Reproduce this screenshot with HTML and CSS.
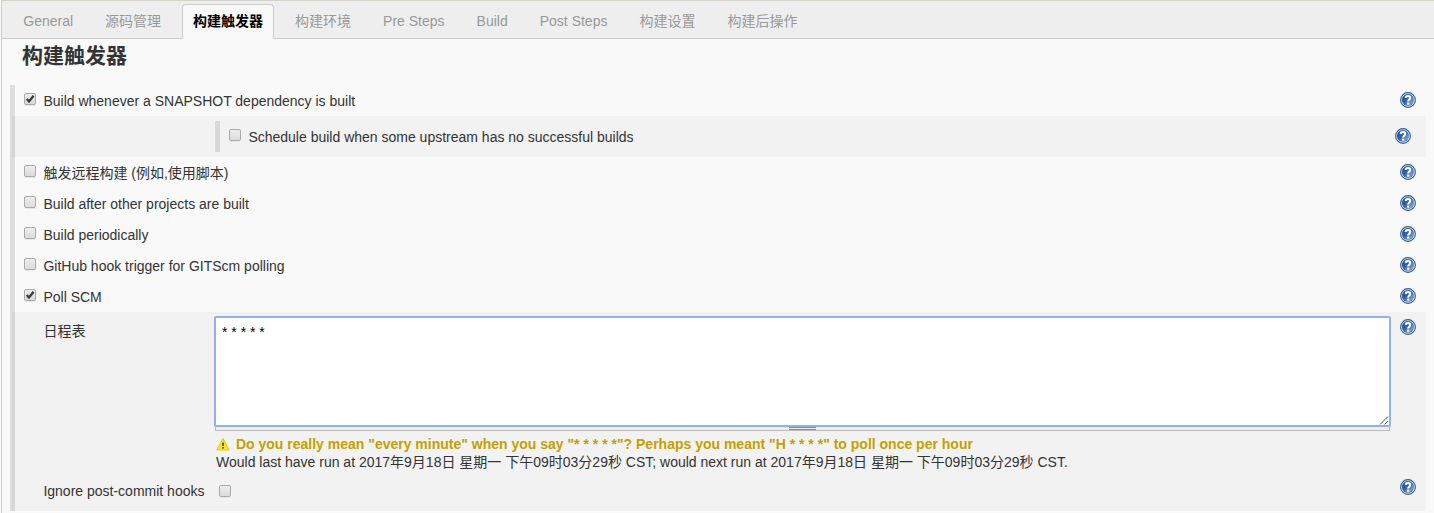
FILE: index.html
```html
<!DOCTYPE html>
<html lang="zh-CN">
<head>
<meta charset="utf-8">
<title>构建触发器</title>
<link rel="stylesheet" href="styles.css">
</head>
<body>
<svg class="defs" width="0" height="0" aria-hidden="true">
  <defs>
    <linearGradient id="blue" x1="0" y1="0" x2="1" y2="1">
      <stop offset="0" stop-color="#204a87"/><stop offset="0.45" stop-color="#3465a4"/><stop offset="0.75" stop-color="#7898c4"/><stop offset="1" stop-color="#305c9c"/>
    </linearGradient>
    <linearGradient id="yellow" x1="0" y1="0" x2="0" y2="1">
      <stop offset="0" stop-color="#f3df3a"/><stop offset="1" stop-color="#fce61c"/>
    </linearGradient>
    <symbol id="help" viewBox="0 0 16 16">
      <circle cx="8" cy="8" r="7.4" fill="#e4ebf5" stroke="#305b9b" stroke-width="1.1"/>
      <circle cx="8" cy="8" r="6.1" fill="url(#blue)"/>
      <path d="M5.8 5.9C5.8 3.5 10.2 3.5 10.2 5.9C10.2 7.4 8.1 7.6 8.1 9.6" fill="none" stroke="#fff" stroke-width="2"/>
      <rect x="7" y="10.6" width="2.2" height="2" fill="#fff"/>
    </symbol>
    <symbol id="check" viewBox="0 0 12 12">
      <path d="M2.7 6L5 8.4L9.6 2.8" fill="none" stroke="#3b3b3b" stroke-width="2.3"/>
    </symbol>
  </defs>
</svg>
<div class="page">
  <nav class="tabs">
    <a class="tab">General</a><a class="tab">源码管理</a><a class="tab active">构建触发器</a><a class="tab">构建环境</a><a class="tab">Pre Steps</a><a class="tab">Build</a><a class="tab">Post Steps</a><a class="tab">构建设置</a><a class="tab">构建后操作</a>
  </nav>
  <h1 class="title">构建触发器</h1>
  <div class="section">
    <div class="row"><span class="box"><svg><use href="#check"/></svg></span><span class="label">Build whenever a SNAPSHOT dependency is built</span><svg class="help"><use href="#help"/></svg></div>
    <div class="nested">
      <div class="nested-row"><span class="box"></span><span class="label">Schedule build when some upstream has no successful builds</span><svg class="help"><use href="#help"/></svg></div>
    </div>
    <div class="row"><span class="box"></span><span class="label">触发远程构建 (例如,使用脚本)</span><svg class="help"><use href="#help"/></svg></div>
    <div class="row"><span class="box"></span><span class="label">Build after other projects are built</span><svg class="help"><use href="#help"/></svg></div>
    <div class="row"><span class="box"></span><span class="label">Build periodically</span><svg class="help"><use href="#help"/></svg></div>
    <div class="row"><span class="box"></span><span class="label">GitHub hook trigger for GITScm polling</span><svg class="help"><use href="#help"/></svg></div>
    <div class="row"><span class="box"><svg><use href="#check"/></svg></span><span class="label">Poll SCM</span><svg class="help"><use href="#help"/></svg></div>
    <div class="poll">
      <div class="field">
        <span class="field-label">日程表</span>
        <div class="control">
          <div class="editor"><span>* * * * *</span>
            <svg class="grip" width="10" height="10"><path d="M1 9.5L9 1.5M5.5 9.5L9 6" fill="none" stroke="#555"/></svg>
          </div>
          <div class="handle"><span class="bars"></span></div>
          <div class="warning">
            <svg width="14" height="14" viewBox="0 0 14 14"><path d="M7 1.5L13.2 13H0.8Z" fill="url(#yellow)" stroke="#e3c51a" stroke-linejoin="round"/><path d="M7 5.5V9M7 10V11.5" stroke="#4a4628" stroke-width="1.6"/></svg>
            <strong>Do you really mean "every minute" when you say "* * * * *"? Perhaps you meant "H * * * *" to poll once per hour</strong>
          </div>
          <div class="schedule">Would last have run at 2017年9月18日 星期一 下午09时03分29秒 CST; would next run at 2017年9月18日 星期一 下午09时03分29秒 CST.</div>
        </div>
        <svg class="help"><use href="#help"/></svg>
      </div>
      <div class="ignore">
        <span class="field-label">Ignore post-commit hooks</span><span class="box"></span><svg class="help"><use href="#help"/></svg>
      </div>
    </div>
  </div>
</div>
</body>
</html>
```
FILE: styles.css
```css
* { box-sizing: border-box; }
body {
  margin: 0;
  background: #f9f9f9;
  color: #333;
  font: 14px/18px "Liberation Sans", "Noto Sans CJK SC", sans-serif;
}
.defs { position: absolute; }
.page {
  height: 513px;
  margin-left: 1px;
  border-left: 1px solid #ccc;
  overflow: hidden;
}
.tabs {
  display: flex;
  gap: 10px;
  height: 39px;
  padding: 3px 0 0 10.3px;
  background: #eee;
  border-top: 1px solid #d3d3cb;
  border-bottom: 1px solid #ccc;
}
.tab {
  height: 35px;
  padding: 0 10px;
  border: 1px solid transparent;
  border-bottom: 0;
  color: #999;
  line-height: 33px;
  white-space: nowrap;
}
.tab.active {
  color: #000;
  background: #f9f9f9;
  border-color: #ccc;
  border-radius: 4px 4px 0 0;
  font-weight: bold;
}
.title {
  height: 46px;
  margin: 0;
  padding: 2px 0 0 20px;
  font-size: 21px;
  line-height: 30px;
}
.section {
  width: 1416px;
  height: 426px;
  margin-left: 8px;
  border-left: 5px solid #ddd;
}
.row {
  display: flex;
  height: 31px;
  padding: 7px 10px 0 9px;
}
.box {
  flex: none;
  width: 12px;
  height: 12px;
  margin-top: 1px;
  border: 1px solid #aaa;
  border-radius: 2px;
  background: linear-gradient(#ededed, #dcdcdc);
  box-shadow: 0 1px 0 #e8e8e8;
}
.box svg {
  display: block;
  width: 12px;
  height: 12px;
  margin: -1px;
}
.label { margin-left: 7.4px; }
.help {
  flex: none;
  width: 16px;
  height: 16px;
  margin-left: auto;
}
.nested {
  height: 41px;
  padding: 5px 15px 0 200px;
  background: #f2f2f2;
}
.nested-row {
  display: flex;
  height: 31px;
  padding: 7px 0 0 9px;
  border-left: 5px solid #d9d9d9;
}
.poll {
  height: 199px;
  padding: 4px 10px 0 28.4px;
  background: #f2f2f2;
}
.nested, .poll { box-shadow: -3px 0 0 #d6d6d6; }
.field {
  display: flex;
  height: 163px;
}
.field-label {
  flex: none;
  width: 170.6px;
  padding-top: 6px;
}
.control { width: 1177px; }
.editor {
  display: flex;
  justify-content: space-between;
  align-items: flex-start;
  height: 111px;
  padding: 5px 0 0 6px;
  background: #fff;
  border: 2px solid #8fb3ee;
  border-radius: 2px;
  color: #000;
  font-size: 14px;
}
.grip { align-self: flex-end; }
.handle {
  display: flex;
  justify-content: center;
  height: 4px;
  margin: 0 1px;
  border: 1px solid #bbbdb6;
  border-top: 0;
  background: #eeeeec;
}
.bars {
  width: 27px;
  height: 3px;
  border-top: 1px solid #888a85;
  border-bottom: 1px solid #888a85;
}
.warning {
  display: flex;
  align-items: center;
  gap: 6px;
  height: 18px;
  margin: 4px 0 0 2px;
  color: #c4a000;
  white-space: nowrap;
}
.schedule {
  margin-left: 2px;
  white-space: nowrap;
}
.field .help { margin-top: 3px; }
.ignore { display: flex; }
.ignore .field-label { width: 175.6px; padding-top: 3px; }
.ignore .box { margin-top: 6px; }
```
